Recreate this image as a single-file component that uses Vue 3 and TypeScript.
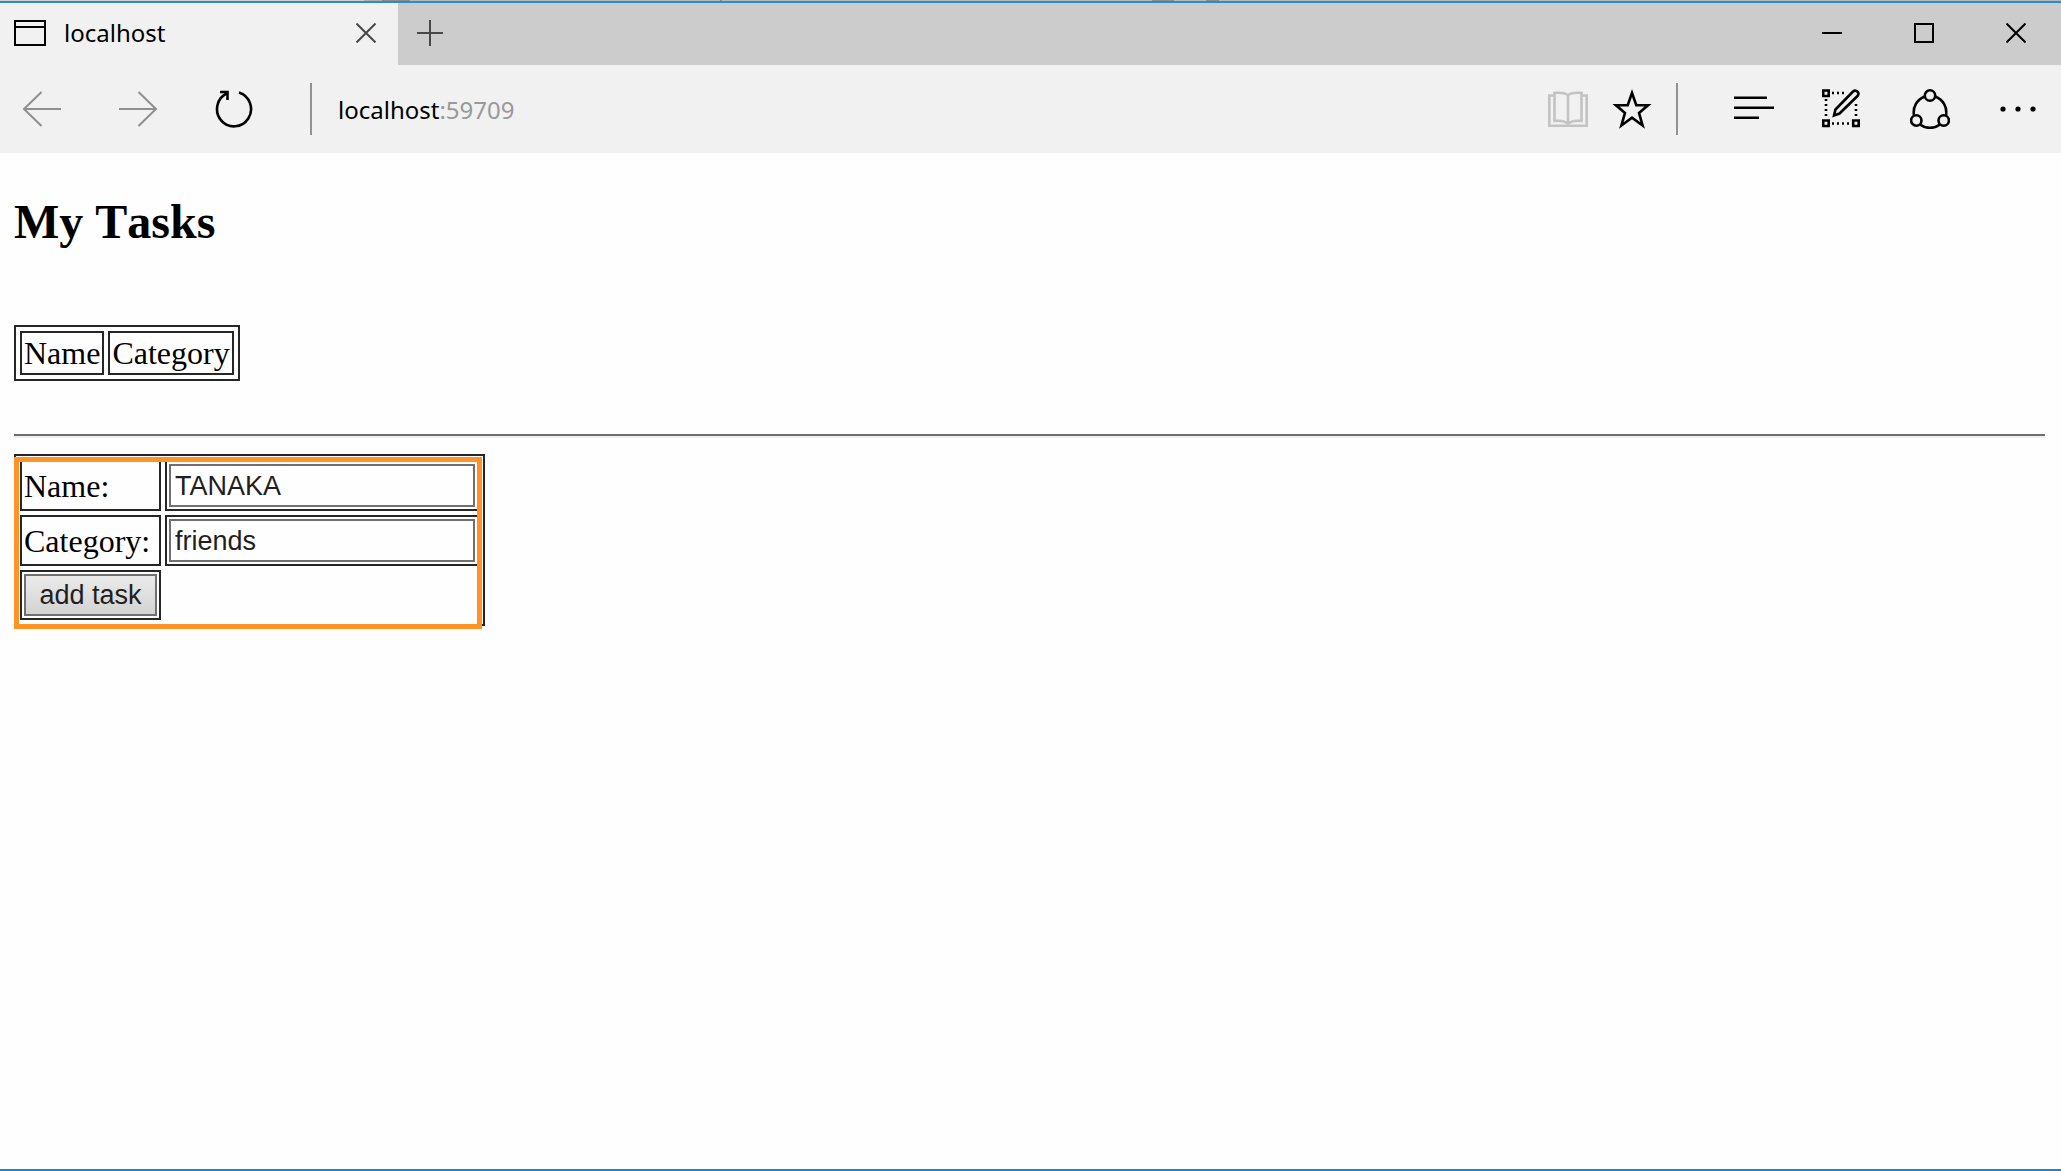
<script setup lang="ts">
import { ref } from 'vue'

interface Task {
  name: string
  category: string
}

const tasks = ref<Task[]>([])
const name = ref('TANAKA')
const category = ref('friends')

function addTask(): void {
  tasks.value.push({ name: name.value, category: category.value })
}
</script>

<template>
  <div class="window">
    <div class="backdrop"></div>
    <header class="titlebar">
      <div class="tab">
        <svg class="page-icon" width="32" height="26" viewBox="0 0 32 26">
          <path d="M1 1H31V25H1ZM1 7H31" />
        </svg>
        <span class="tab-title">localhost</span>
        <button class="icon tab-close" aria-label="Close tab">
          <svg width="20" height="20" viewBox="0 0 20 20"><path d="M.5 .5L19.500 19.500M19.500 .5L.5 19.500" /></svg>
        </button>
      </div>
      <button class="icon new-tab" aria-label="New tab">
        <svg width="26" height="26" viewBox="0 0 26 26"><path d="M13 0V26M0 13H26" /></svg>
      </button>
      <div class="window-controls">
        <button class="icon" aria-label="Minimize">
          <svg width="20" height="20" viewBox="0 0 20 20"><path d="M0 10H20" /></svg>
        </button>
        <button class="icon" aria-label="Maximize">
          <svg width="20" height="20" viewBox="0 0 20 20"><path d="M1 1H19V19H1Z" /></svg>
        </button>
        <button class="icon" aria-label="Close">
          <svg width="20" height="20" viewBox="0 0 20 20"><path d="M.5 .5L19.500 19.500M19.500 .5L.5 19.500" /></svg>
        </button>
      </div>
    </header>

    <nav class="toolbar">
      <div class="nav-buttons">
        <button class="icon muted" aria-label="Back">
          <svg width="40" height="40" viewBox="0 0 40 40"><path d="M39 20H2M19.500 3L2 20L19.500 37" /></svg>
        </button>
        <button class="icon muted" aria-label="Forward">
          <svg width="40" height="40" viewBox="0 0 40 40"><path d="M1 20H38M20.500 3L38 20L20.500 37" /></svg>
        </button>
        <button class="icon" aria-label="Refresh">
          <svg class="bold" width="40" height="40" viewBox="0 0 40 40">
            <path d="M25 3.500A17 17.300 0 1 1 13 4.300" />
            <path d="M6 3H13.500V11" />
          </svg>
        </button>
      </div>
      <div class="divider"></div>
      <div class="address"><span>localhost</span><span class="port">:59709</span></div>
      <div class="page-actions">
        <button class="icon reading" aria-label="Reading view">
          <svg class="bold" width="40" height="40" viewBox="0 0 40 40">
            <path d="M6 6.500H1.300V36.700H38.700V6.500H34M20 6C16 3.500 11 3.500 6.500 4V32C11 31.500 16 31.500 20 34.500C24 31.500 29 31.500 33.500 32V4C29 3.500 24 3.500 20 6V34" />
          </svg>
        </button>
        <button class="icon" aria-label="Add to favorites">
          <svg class="bold" width="40" height="40" viewBox="0 0 40 40">
            <path d="M20 4L24.300 16.300H36L27 23.900L30.600 36.500L20 28.700L9.400 36.500L13 23.900L4 16.300H15.700Z" />
          </svg>
        </button>
      </div>
      <div class="divider"></div>
      <div class="menu-actions">
        <button class="icon" aria-label="Hub">
          <svg class="bold" width="40" height="40" viewBox="0 0 40 40"><path d="M0 8.700H33M0 18.700H40M0 28.700H25" /></svg>
        </button>
        <button class="icon" aria-label="Make a web note">
          <svg class="bold" width="40" height="40" viewBox="0 0 40 40">
            <path d="M1.200 1.500H6.700V7H1.200ZM1.200 31.500H6.700V37H1.200ZM31.200 31.500H36.700V37H31.200Z" />
            <path class="dots" d="M10 4H23M10 34.500H29M4 10V29M34 15V29" />
            <path d="M12 26.500L13.500 20.500L31 2.500C34 0 38.500 4 35.500 7L17.500 24.500Z" />
          </svg>
        </button>
        <button class="icon" aria-label="Share">
          <svg class="bold" width="40" height="40" viewBox="0 0 40 40">
            <circle cx="20" cy="6.500" r="5.200" /><circle cx="6.300" cy="31.500" r="5.200" /><circle cx="33.700" cy="31.500" r="5.200" />
            <path d="M14.800 7.500C7 10.500 2.500 18 4 26.500M25.200 7.500C33 10.500 37.500 18 36 26.500M10 35.500C16 40 24 40 30 35.500" />
          </svg>
        </button>
        <button class="icon" aria-label="More">
          <svg width="40" height="40" viewBox="0 0 40 40">
            <g class="solid"><circle cx="5" cy="20" r="2.600" /><circle cx="20" cy="20" r="2.600" /><circle cx="35" cy="20" r="2.600" /></g>
          </svg>
        </button>
      </div>
    </nav>

    <main class="page">
      <h2>My Tasks</h2>
      <table class="grid">
        <thead>
          <tr><td>Name</td><td>Category</td></tr>
        </thead>
        <tbody v-if="tasks.length">
          <tr v-for="(task, i) in tasks" :key="i"><td>{{ task.name }}</td><td>{{ task.category }}</td></tr>
        </tbody>
      </table>
      <hr />
      <form class="task-form" @submit.prevent="addTask">
        <table class="grid">
          <tbody>
            <tr>
              <td><label for="task-name">Name:</label></td>
              <td><input id="task-name" v-model="name" type="text" /></td>
            </tr>
            <tr>
              <td><label for="task-category">Category:</label></td>
              <td><input id="task-category" v-model="category" type="text" /></td>
            </tr>
            <tr>
              <td><button class="submit" type="submit">add task</button></td>
            </tr>
          </tbody>
        </table>
        <div class="highlight"></div>
      </form>
    </main>
  </div>
</template>

<style>
body {
  margin: 0;
  background: #fefefe;
}
</style>

<style scoped>
.window {
  box-sizing: border-box;
  min-height: 100vh;
  display: flex;
  flex-direction: column;
  border-bottom: 2px solid #1e82d2;
  color: #000;
}
.backdrop {
  height: 1px;
  background: linear-gradient(
    90deg,
    #d0d0d0 364px,
    #b0b0b0 364px 382px,
    #8c8c8c 382px 410px,
    #b9b9b9 410px 720px,
    #8c8c8c 720px 722px,
    #b9b9b9 722px 1152px,
    #8c8c8c 1152px 1174px,
    #b9b9b9 1174px 1206px,
    #8c8c8c 1206px 1219px,
    #b9b9b9 1219px
  );
}
.titlebar {
  height: 62px;
  display: flex;
  border-top: 2px solid #2b8ad6;
  background: #ccc;
}
.tab {
  box-sizing: border-box;
  width: 398px;
  display: flex;
  align-items: center;
  padding: 0 12px 2px 14px;
  background: #f1f1f1;
}
.tab-title,
.address {
  font: 24px/32px "Noto Sans", sans-serif;
}
.tab-title {
  flex: 1;
  margin-left: 18px;
}
.icon {
  width: 40px;
  height: 40px;
  padding: 0;
  border: 0;
  display: flex;
  align-items: center;
  justify-content: center;
  background: none;
  color: #000;
}
svg {
  display: block;
  fill: none;
  stroke: currentColor;
  stroke-width: 2;
}
.bold {
  stroke-width: 2.6;
}
.tab-close,
.new-tab {
  color: #484848;
}
.new-tab {
  height: 60px;
  margin-left: 12px;
}
.window-controls {
  margin-left: auto;
  display: flex;
  gap: 52px;
  align-items: center;
  padding: 0 25px 2px 0;
}
.toolbar {
  height: 88px;
  display: flex;
  align-items: center;
  background: #f1f1f1;
}
.nav-buttons {
  display: flex;
  gap: 56px;
  margin: 0 56px 0 22px;
}
.muted {
  color: #8f8f8f;
}
.divider {
  width: 2px;
  height: 52px;
  background: #929292;
}
.address {
  flex: 1;
  margin-left: 26px;
  padding-top: 2px;
}
.port {
  color: #999;
}
.page-actions {
  display: flex;
  gap: 24px;
  margin-right: 24px;
}
.reading {
  color: #c3c3c3;
}
.menu-actions {
  display: flex;
  gap: 48px;
  margin: 0 23px 0 56px;
}
.dots {
  stroke-dasharray: 2 3;
}
.solid {
  fill: currentColor;
  stroke: none;
}
.page {
  padding: 0 16px 0 14px;
  font: 32px/36px "Liberation Serif", serif;
}
h2 {
  margin: 41px 0 75px;
  font-size: 48px;
  line-height: 56px;
  font-kerning: none;
}
.grid {
  border: 2px solid #262626;
  border-collapse: separate;
  border-spacing: 4px;
}
.grid td {
  padding: 2px;
  border: 2px solid #262626;
}
hr {
  height: 0;
  margin: 53px 0 16px;
  border: 0;
  border-top: 2px solid #6c6c6c;
  border-bottom: 2px solid #efefef;
}
.task-form {
  position: relative;
  width: 471px;
}
.task-form .grid {
  width: 100%;
}
.task-form td:first-child {
  width: 133px;
}
input,
.submit {
  box-sizing: border-box;
  display: block;
  width: 100%;
  height: 43px;
  padding: 2px 4px 0;
  border: 2px solid #707070;
  border-radius: 0;
  background: #fefefe;
  color: #1f1f1f;
  font: 27px/32px "Liberation Sans", sans-serif;
}
.submit {
  height: 42px;
  padding: 0 4px;
  background: linear-gradient(#ebebeb, #d3d3d3);
}
.highlight {
  position: absolute;
  inset: 3px 3px -3px 0;
  border: 5px solid #ff9325;
  pointer-events: none;
}
</style>
